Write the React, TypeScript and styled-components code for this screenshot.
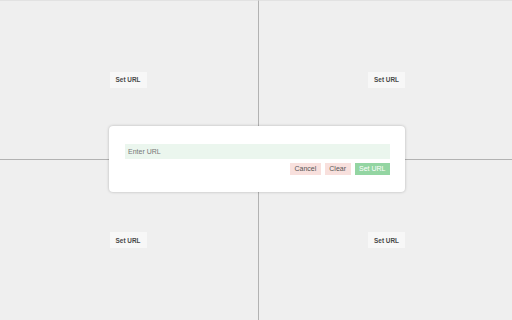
import styled, { createGlobalStyle } from "styled-components";

const GlobalStyle = createGlobalStyle`
  html, body {
    margin: 0;
    padding: 0;
    background: #efefef;
  }
  body {
    font-family: "Liberation Sans", Arial, sans-serif;
  }
`;

const App = () => {
  return (
    <>
      <GlobalStyle />
      <Page>
        <Grid>
          {[0, 1, 2, 3].map((i) => (
            <Pane key={i} $col={i % 2} $row={Math.floor(i / 2)}>
              <PaneButton>Set URL</PaneButton>
            </Pane>
          ))}
        </Grid>
        <Overlay>
          <Dialog>
            <UrlInput placeholder="Enter URL" />
            <Actions>
              <ActionButton $kind="muted">Cancel</ActionButton>
              <ActionButton $kind="muted">Clear</ActionButton>
              <ActionButton $kind="primary">Set URL</ActionButton>
            </Actions>
          </Dialog>
        </Overlay>
      </Page>
    </>
  );
};

const Page = styled.div`
  position: relative;
  width: 512px;
  height: 320px;
  overflow: hidden;
`;

const Grid = styled.div`
  display: grid;
  grid-template-columns: 259px 253px;
  grid-template-rows: 160px 160px;
  width: 100%;
  height: 100%;
`;

const Pane = styled.div<{ $col: number; $row: number }>`
  display: flex;
  align-items: center;
  justify-content: center;
  background: #efefef;
  box-sizing: border-box;
  border-top: ${(p) => (p.$row === 0 ? "1px solid #e2e2e2" : "none")};
  border-bottom: ${(p) => (p.$row === 0 ? "1px solid #b2b2b2" : "none")};
  border-right: ${(p) => (p.$col === 0 ? "1px solid #b2b2b2" : "none")};
  padding-right: ${(p) => (p.$col === 0 ? "2px" : "0")};
  padding-left: ${(p) => (p.$col === 1 ? "2px" : "0")};
  padding-bottom: ${(p) => (p.$row === 0 ? "1px" : "0")};
`;

const PaneButton = styled.button`
  font-family: "Liberation Sans", Arial, sans-serif;
  font-size: 6.4px;
  font-weight: bold;
  color: #484848;
  background: #f7f7f7;
  border: none;
  padding: 0;
  height: 16px;
  width: 37px;
  cursor: pointer;
`;

const Overlay = styled.div`
  position: absolute;
  inset: 0;
  display: flex;
  align-items: center;
  justify-content: center;
  padding-left: 2px;
  padding-bottom: 2px;
  box-sizing: border-box;
`;

const Dialog = styled.div`
  width: 296px;
  height: 66px;
  box-sizing: border-box;
  background: #fff;
  border-radius: 4px;
  box-shadow: 0 0 3px rgba(0, 0, 0, 0.25);
  padding: 18px 15px 0 16px;
  display: flex;
  flex-direction: column;
  gap: 4px;
`;

const UrlInput = styled.input`
  height: 15px;
  box-sizing: border-box;
  border: none;
  outline: none;
  background: #ebf6ee;
  font-family: "Liberation Sans", Arial, sans-serif;
  font-size: 7px;
  padding: 0 3px;
  color: #555;

  &::placeholder {
    color: #777;
  }
`;

const Actions = styled.div`
  display: flex;
  justify-content: flex-end;
  gap: 4px;
`;

const ActionButton = styled.button<{ $kind: "muted" | "primary" }>`
  height: 12px;
  padding: 0 4.5px;
  border: none;
  font-family: "Liberation Sans", Arial, sans-serif;
  font-size: 7px;
  line-height: 12px;
  background: ${(p) => (p.$kind === "primary" ? "#93d5a2" : "#f8e0dd")};
  color: ${(p) => (p.$kind === "primary" ? "#fff" : "#555")};
  cursor: pointer;
`;

export default App;
